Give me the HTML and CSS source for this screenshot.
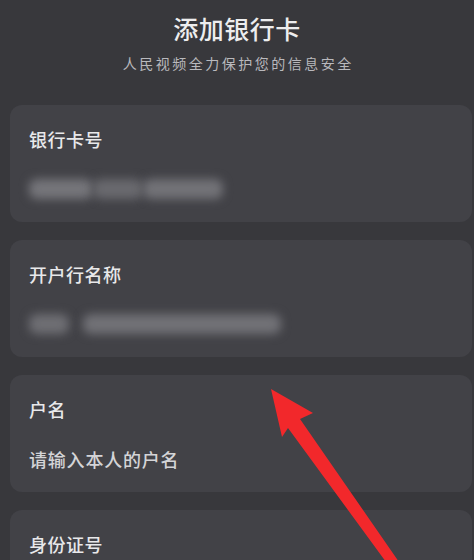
FILE: index.html
```html
<!DOCTYPE html>
<html lang="zh-CN">
<head>
<meta charset="utf-8">
<title>添加银行卡</title>
<link rel="stylesheet" href="styles.css">
</head>
<body>
<div class="page">
  <header class="header">
    <h1 class="title">添加银行卡</h1>
    <p class="subtitle">人民视频全力保护您的信息安全</p>
  </header>
  <main class="form">
    <section class="card">
      <div class="label">银行卡号</div>
      <div class="value blurred">
        <span class="blob b1"></span>
        <span class="blob b2"></span>
        <span class="blob b3"></span>
      </div>
    </section>
    <section class="card">
      <div class="label">开户行名称</div>
      <div class="value blurred">
        <span class="blob b4"></span>
        <span class="blob b5"></span>
      </div>
    </section>
    <section class="card">
      <div class="label">户名</div>
      <div class="value placeholder">请输入本人的户名</div>
    </section>
    <section class="card">
      <div class="label">身份证号</div>
    </section>
  </main>
  <svg class="arrow" width="474" height="560" viewBox="0 0 474 560" aria-hidden="true">
    <polygon points="271,389 313,413 300,419 399,562 386,562 288,428 282,437" fill="#f2282b"/>
  </svg>
</div>
</body>
</html>
```

FILE: styles.css
```css
* { box-sizing: border-box; }
html, body {
  margin: 0;
  padding: 0;
  background: #38383c;
}
body {
  font-family: "Noto Sans CJK SC", "Noto Sans", sans-serif;
  width: 474px;
  height: 560px;
  overflow: hidden;
}
.page {
  position: relative;
  width: 474px;
  height: 560px;
  overflow: hidden;
}
.header {
  display: flex;
  flex-direction: column;
  align-items: center;
  padding-top: 12px;
}
.title {
  margin: 0;
  font-size: 25px;
  line-height: 32px;
  font-weight: 500;
  color: #ededee;
  letter-spacing: 0.5px;
}
.subtitle {
  margin: 9px 0 0;
  font-size: 14px;
  line-height: 20px;
  color: #b9b9bd;
  letter-spacing: 2.5px;
  padding-left: 2.5px;
}
.form {
  display: flex;
  flex-direction: column;
  gap: 18px;
  margin-top: 32px;
  padding-left: 10px;
  padding-right: 2px;
}
.card {
  height: 117px;
  border-radius: 12px;
  background: #424247;
  padding: 22px 19px 0;
  display: flex;
  flex-direction: column;
  gap: 26px;
  flex-shrink: 0;
}
.label {
  font-size: 18px;
  line-height: 24px;
  font-weight: 500;
  color: #e8e8ea;
  letter-spacing: 0.5px;
}
.value {
  height: 24px;
  font-size: 18px;
  line-height: 24px;
}
.placeholder {
  color: #d4d4d7;
  font-weight: 500;
  letter-spacing: 0.8px;
}
.blurred {
  display: flex;
  align-items: center;
}
.blob {
  display: block;
  height: 20px;
  border-radius: 8px;
  filter: blur(5px);
}
.b1 { width: 64px; background: #75757a; }
.b2 { width: 50px; background: #69696e; }
.b3 { width: 80px; background: #727277; }
.b4 { width: 40px; background: #6e6e73; margin-right: 14px; }
.b5 { width: 198px; background: #717176; }
.arrow {
  position: absolute;
  left: 0;
  top: 0;
  pointer-events: none;
}
```
